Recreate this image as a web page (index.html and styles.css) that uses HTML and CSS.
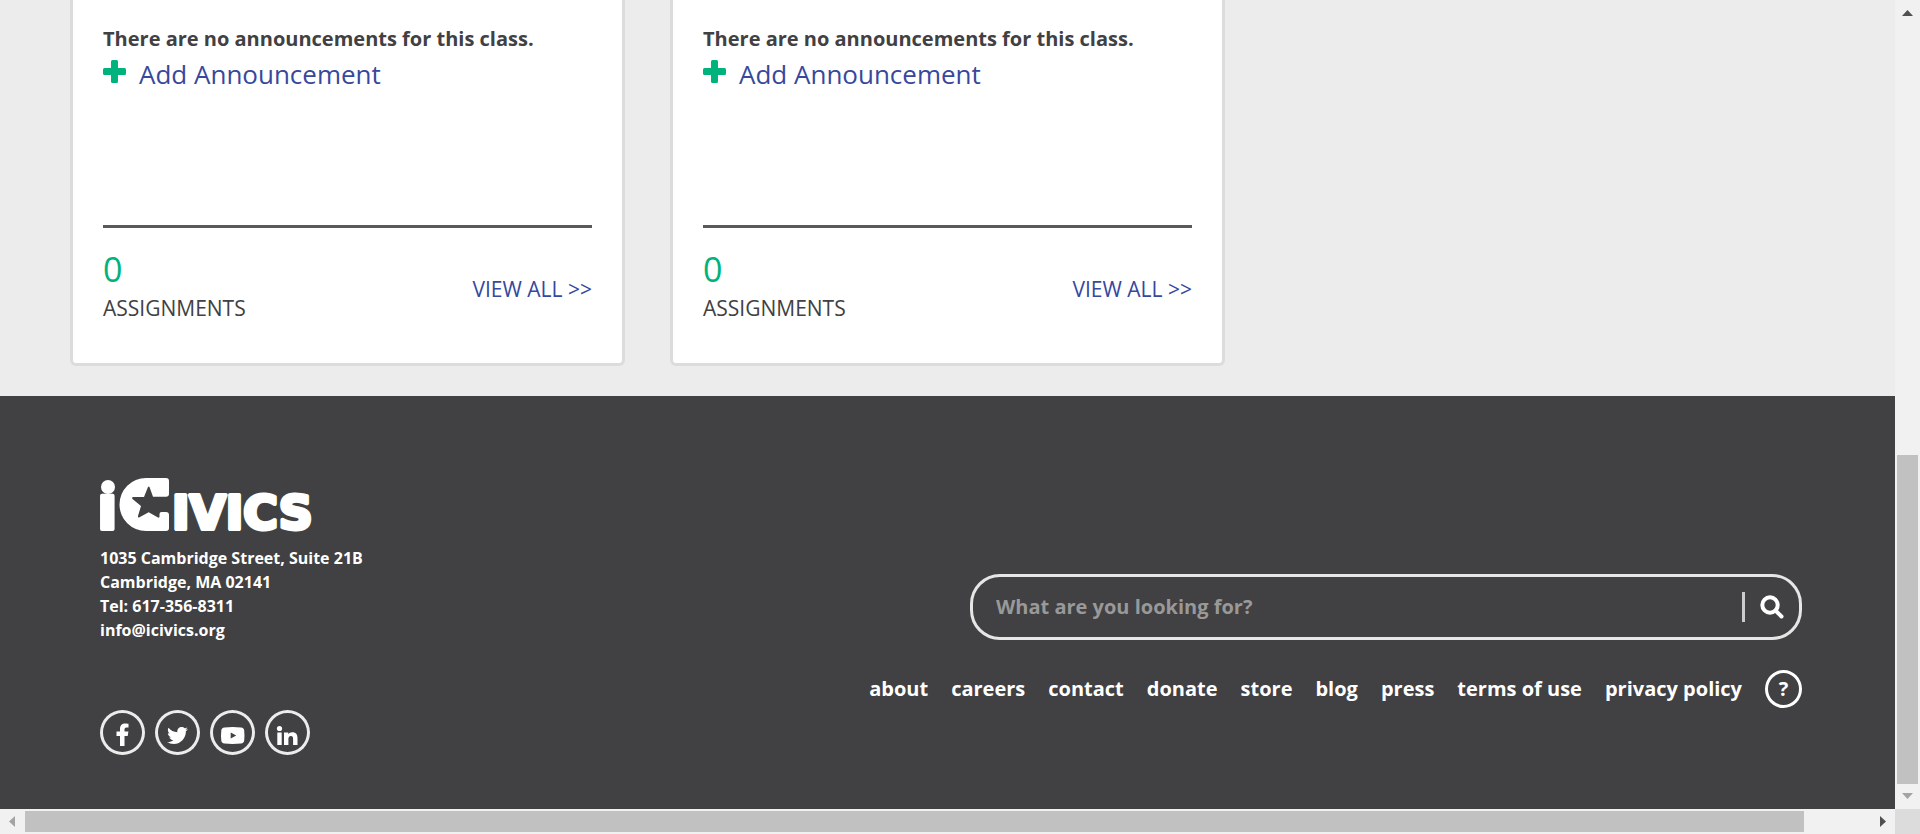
FILE: index.html
```html
<!DOCTYPE html>
<html lang="en">
<head>
<meta charset="utf-8">
<title>My Classes | iCivics</title>
<link rel="stylesheet" href="styles.css">
</head>
<body>
<div class="window">
  <div class="page">
    <main class="classes">
      <article class="card">
        <section class="announcements">
          <p class="empty-note">There are no announcements for this class.</p>
          <a class="add-link" href="#">
            <svg class="plus" viewBox="0 0 23 23" aria-hidden="true"><path d="M9.500 0h4q1.500 0 1.500 1.500V8h6.500Q23 8 23 9.500v4q0 1.500-1.500 1.500H15v6.500q0 1.500-1.500 1.500h-4Q8 23 8 21.500V15H1.500Q0 15 0 13.500v-4Q0 8 1.500 8H8V1.500Q8 0 9.500 0z"/></svg>
            <span>Add Announcement</span>
          </a>
        </section>
        <section class="assignments">
          <div>
            <p class="count">0</p>
            <p class="label">ASSIGNMENTS</p>
          </div>
          <a class="view-all" href="#">VIEW ALL &gt;&gt;</a>
        </section>
      </article>
      <article class="card">
        <section class="announcements">
          <p class="empty-note">There are no announcements for this class.</p>
          <a class="add-link" href="#">
            <svg class="plus" viewBox="0 0 23 23" aria-hidden="true"><path d="M9.500 0h4q1.500 0 1.500 1.500V8h6.500Q23 8 23 9.500v4q0 1.500-1.500 1.500H15v6.500q0 1.500-1.500 1.500h-4Q8 23 8 21.500V15H1.500Q0 15 0 13.500v-4Q0 8 1.500 8H8V1.500Q8 0 9.500 0z"/></svg>
            <span>Add Announcement</span>
          </a>
        </section>
        <section class="assignments">
          <div>
            <p class="count">0</p>
            <p class="label">ASSIGNMENTS</p>
          </div>
          <a class="view-all" href="#">VIEW ALL &gt;&gt;</a>
        </section>
      </article>
    </main>
    <footer class="footer">
      <div class="contact">
        <a class="logo" href="#" aria-label="iCivics home">
          <svg viewBox="-4 -10 240 78" aria-hidden="true">
            <circle cx="8" cy="9" r="7"/>
            <text class="logo-i" x="-3" y="51">ı</text>
            <path d="M66 0H46a26.500 26.500 0 0 0 0 53h20q3 0 3-3V37q0-3-3-3h-4.500q-2 0-2 2v2.500q0 1.500-1.500 1l-9.300-5.200-9.200 5q-1.800.700-1.500-1.200L41 28l-8.500-7q-1-1.500.500-2h11l4-10q.700-1 1.500 0l3.500 9.700h13q3 0 3-3V3q0-3-3-3z"/>
            <text class="logo-rest" x="72" y="51">IVICS</text>
          </svg>
        </a>
        <address class="address">
          1035 Cambridge Street, Suite 21B<br>
          Cambridge, MA 02141<br>
          Tel: 617-356-8311<br>
          <a href="#">info@icivics.org</a>
        </address>
        <nav class="social" aria-label="Social media">
          <a href="#" aria-label="Facebook"><svg viewBox="0 0 45 45"><path d="M20 36V26h-3.500v-4.500H20V19c0-3.700 2-5.500 5.300-5.500 1.500 0 3.200.300 3.200.300v3.700h-1.900c-1.700 0-2.100 1-2.100 2v2h3.900l-.700 4.500h-3.200v10z"/></svg></a>
          <a href="#" aria-label="Twitter"><svg viewBox="0 0 45 45"><path transform="translate(12 15) scale(.041)" d="M459.370 151.716c.325 4.548.325 9.097.325 13.645 0 138.720-105.583 298.558-298.558 298.558-59.452 0-114.680-17.219-161.137-47.106 8.447.974 16.568 1.299 25.340 1.299 49.055 0 94.213-16.568 130.274-44.832-46.132-.975-84.792-31.188-98.112-72.772 6.498.974 12.995 1.624 19.818 1.624 9.421 0 18.843-1.300 27.614-3.573-48.081-9.747-84.143-51.980-84.143-102.985v-1.299c13.969 7.797 30.214 12.670 47.431 13.319-28.264-18.843-46.781-51.005-46.781-87.391 0-19.492 5.197-37.360 14.294-52.954 51.655 63.675 129.300 105.258 216.365 109.807-1.624-7.797-2.599-15.918-2.599-24.040 0-57.828 46.782-104.934 104.934-104.934 30.213 0 57.502 12.670 76.670 33.137 23.715-4.548 46.456-13.320 66.599-25.340-7.798 24.366-24.366 44.833-46.132 57.827 21.117-2.273 41.584-8.122 60.426-16.243-14.292 20.791-32.161 39.308-52.628 54.253z"/></svg></a>
          <a href="#" aria-label="YouTube"><svg viewBox="0 0 45 45"><path fill-rule="evenodd" d="M14.500 17.500Q22.500 16.500 31 17.500q3 .300 3.200 3 .500 5 0 10-.300 2.700-3.200 3-8.500.800-16.500 0-3-.300-3.200-3-.600-5 0-10 .200-2.700 3.200-3zM20.700 22.500v6l5.500-3z"/></svg></a>
          <a href="#" aria-label="LinkedIn"><svg viewBox="0 0 45 45"><circle cx="14.500" cy="18.500" r="2.600"/><path d="M12.300 22.500h4.400V35h-4.400zM19 22.500h4.300v1.700c.700-1.200 2.100-2 3.900-2 4.200 0 5.300 2.500 5.300 6V35h-4.400v-6.100c0-1.500-.200-3-2.200-3s-2.500 1.500-2.500 3V35H19z"/></svg></a>
        </nav>
      </div>
      <div class="site-tools">
        <form class="search">
          <input type="search" aria-label="Search" placeholder="What are you looking for?">
          <button type="submit" aria-label="Search"><svg viewBox="0 0 24 24"><circle cx="10" cy="10" r="7.700"/><path d="M16 16l5.500 5.500"/></svg></button>
        </form>
        <nav class="links" aria-label="Footer">
          <a href="#">about</a>
          <a href="#">careers</a>
          <a href="#">contact</a>
          <a href="#">donate</a>
          <a href="#">store</a>
          <a href="#">blog</a>
          <a href="#">press</a>
          <a href="#">terms of use</a>
          <a href="#">privacy policy</a>
          <a class="help" href="#">?</a>
        </nav>
      </div>
    </footer>
  </div>
  <div class="bar bar-v" aria-hidden="true">
    <svg class="arrow arrow-on" viewBox="0 0 25 25"><path d="M7 16l5.500-6 5.500 6z"/></svg>
    <div class="track"><div class="thumb"></div></div>
    <svg class="arrow" viewBox="0 0 25 25"><path d="M7 9l5.500 6L18 9z"/></svg>
  </div>
  <div class="bar bar-h" aria-hidden="true">
    <svg class="arrow" viewBox="0 0 25 25"><path d="M15 7l-6 5.500 6 5.500z"/></svg>
    <div class="track"><div class="thumb"></div></div>
    <svg class="arrow arrow-on" viewBox="0 0 25 25"><path d="M10 7l6 5.500-6 5.500z"/></svg>
  </div>
  <div class="corner"></div>
</div>
</body>
</html>
```
FILE: styles.css
```css
* { box-sizing: border-box; }
body {
  margin: 0;
  font-family: "Open Sans", "Noto Sans", sans-serif;
  font-size: 20px;
  line-height: 30px;
  color: #414042;
  background: #ececec;
}
p { margin: 0; }
a { color: inherit; text-decoration: none; }
svg { display: block; }

.window {
  display: grid;
  grid-template-columns: minmax(0, 1fr) 25px;
  grid-template-rows: 1fr 25px;
  min-height: 100vh;
}
.page { display: flex; flex-direction: column; }

/* Class cards */
.classes {
  display: grid;
  grid-template-columns: repeat(3, minmax(0, 1fr));
  gap: 45px;
  padding: 0 70px 30px;
}
.card {
  padding: 24px 30px 38px;
  background: #fff;
  border: 3px solid #dcdcdc;
  border-top: 0;
  border-radius: 0 0 6px 6px;
}
.announcements {
  min-height: 204px;
  border-bottom: 3px solid #58595b;
}
.empty-note { font-weight: 700; }
.add-link {
  display: flex;
  align-items: center;
  gap: 13px;
  font-size: 26px;
  line-height: 40px;
  color: #37489d;
}
.plus { width: 23px; height: 23px; margin-bottom: 6px; fill: #00b27c; }
.assignments {
  display: flex;
  justify-content: space-between;
  align-items: center;
  padding-top: 18px;
}
.count { font-size: 34px; line-height: 46px; color: #00b27c; }
.label { font-size: 21px; line-height: 33px; }
.view-all { padding-top: 6px; font-size: 21px; color: #37489d; }

/* Footer */
.footer {
  flex: 1;
  display: flex;
  justify-content: space-between;
  align-items: flex-end;
  padding: 72px 93px 54px 100px;
  color: #fff;
  background: #414042;
  font-weight: 700;
}
.logo { display: block; margin-left: -4px; }
.logo svg { width: 240px; height: 78px; fill: #fff; }
.logo-i, .logo-rest {
  font-family: "DejaVu Sans", sans-serif;
  font-weight: 700;
  stroke: #fff;
  stroke-width: 4px;
  stroke-linejoin: round;
}
.logo-i { font-size: 60px; }
.logo-rest { font-size: 47px; }
.address {
  margin-bottom: 68px;
  font-size: 16px;
  font-style: normal;
  line-height: 24px;
}
.social { display: flex; gap: 10px; }
.social a {
  width: 45px;
  height: 45px;
  border-radius: 50%;
  box-shadow: inset 0 0 0 3px #ececec;
}
.social svg { width: 45px; height: 45px; fill: #fff; }

.site-tools {
  display: flex;
  flex-direction: column;
  align-items: flex-end;
  gap: 30px;
  margin-bottom: 47px;
}
.search {
  display: flex;
  align-items: center;
  width: 832px;
  max-width: 100%;
  height: 66px;
  padding: 0 15px 0 23px;
  border: 3px solid #e6e6e6;
  border-radius: 30px;
}
.search input {
  flex: 1;
  min-width: 0;
  padding: 0;
  border: 0;
  outline: 0;
  background: none;
  color: #fff;
  font: inherit;
}
.search input::placeholder { color: #999; opacity: 1; }
.search button {
  height: 30px;
  padding: 0 0 0 15px;
  border: 0;
  border-left: 3px solid #ccc;
  background: none;
}
.search svg {
  width: 24px;
  height: 24px;
  fill: none;
  stroke: #fff;
  stroke-width: 4px;
  stroke-linecap: round;
}
.links { display: flex; align-items: center; gap: 23px; }
.help {
  width: 37px;
  height: 38px;
  border: 3px solid #fff;
  border-radius: 50%;
  line-height: 32px;
  text-align: center;
}

/* Scroll bars */
.bar { display: flex; background: #f1f1f1; }
.bar-v { flex-direction: column; }
.arrow { width: 25px; height: 25px; fill: #a3a3a3; }
.arrow-on { fill: #505050; }
.track { flex: 1; display: flex; }
.thumb { background: #c1c1c1; }
.bar-v .track { flex-direction: column; justify-content: flex-end; padding: 0 2px; }
.bar-v .thumb { height: 43.4%; }
.bar-h .track { padding: 2px 0; }
.bar-h .thumb { width: 96.4%; }
.bar-h { grid-row: 2; }
.corner { background: #dcdcdc; }
```
